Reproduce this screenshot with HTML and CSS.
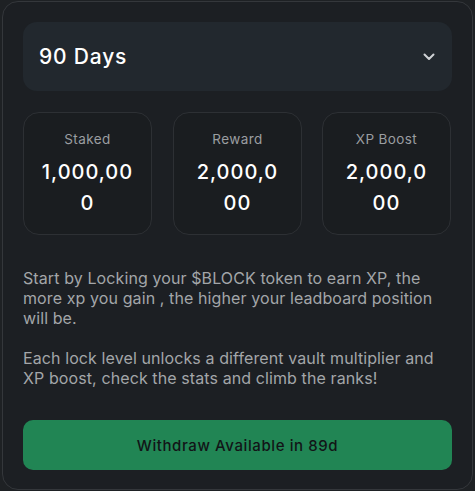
FILE: index.html
```html
<!DOCTYPE html>
<html>
<head>
<meta charset="utf-8">
<link rel="stylesheet" href="styles.css">
</head>
<body>
<div class="card">
  <div class="select">
    <span class="select-label">90 Days</span>
    <svg class="chev" width="12" height="8" viewBox="0 0 12 8"><path d="M1.5 1.5 L6 6 L10.5 1.5" fill="none" stroke="#cfd2d5" stroke-width="2" stroke-linecap="round" stroke-linejoin="round"/></svg>
  </div>
  <div class="stats">
    <div class="stat">
      <div class="stat-label">Staked</div>
      <div class="stat-value">1,000,00<wbr>0</div>
    </div>
    <div class="stat">
      <div class="stat-label">Reward</div>
      <div class="stat-value">2,000,0<wbr>00</div>
    </div>
    <div class="stat">
      <div class="stat-label">XP Boost</div>
      <div class="stat-value">2,000,0<wbr>00</div>
    </div>
  </div>
  <div class="desc">
    <p>Start by Locking your $BLOCK token to earn XP, the more xp you gain , the higher your leadboard position will be.</p>
    <p>Each lock level unlocks a different vault multiplier and XP boost, check the stats and climb the ranks!</p>
  </div>
  <button class="withdraw">Withdraw Available in 89d</button>
</div>
</body>
</html>
```
FILE: styles.css
```css
* { box-sizing: border-box; }
html, body {
  margin: 0;
  padding: 0;
  background: #1e2124;
  font-family: "Inter", "Noto Sans", sans-serif;
}
.card {
  margin: 1px 2px 0 2px;
  width: 471px;
  height: 489px;
  border: 1px solid #34373b;
  border-radius: 16px;
  background: #1c1f23;
  padding: 20px 20px 19px 20px;
  display: flex;
  flex-direction: column;
}
.select {
  height: 69px;
  border-radius: 14px;
  background: #22282e;
  display: flex;
  align-items: center;
  justify-content: space-between;
  padding: 0 17px 0 16px;
}
.select-label {
  color: #ffffff;
  font-size: 21px;
  font-weight: 500;
  letter-spacing: 0.8px;
}
.chev { display: block; }
.stats {
  margin-top: 21px;
  display: flex;
  gap: 21px;
}
.stats .stat:last-child { margin-left: -1px; }
.stat {
  width: 129px;
  height: 123px;
  border: 1px solid #2d3034;
  border-radius: 16px;
  background: #1a1d20;
  display: flex;
  flex-direction: column;
  align-items: center;
  justify-content: center;
  padding-top: 1px;
}
.stat-label {
  color: #9b9ea1;
  font-size: 13.5px;
  line-height: 18px;
  letter-spacing: 0.4px;
}
.stat-value {
  margin-top: 9px;
  width: 100px;
  color: #ffffff;
  font-size: 20px;
  font-weight: 500;
  line-height: 31px;
  letter-spacing: 1px;
  text-align: center;
}
.desc {
  margin-top: 33px;
  color: #a3a6a9;
  font-size: 16px;
  line-height: 20px;
  letter-spacing: 0.1px;
}
.desc p { margin: 0 0 20px 0; }
.desc p:last-child { margin-bottom: 0; }
.withdraw {
  margin-top: auto;
  height: 50px;
  width: 100%;
  border: none;
  border-radius: 10px;
  background: #218554;
  color: #121417;
  font-family: inherit;
  font-size: 15px;
  font-weight: 500;
  letter-spacing: 0.6px;
}
```
